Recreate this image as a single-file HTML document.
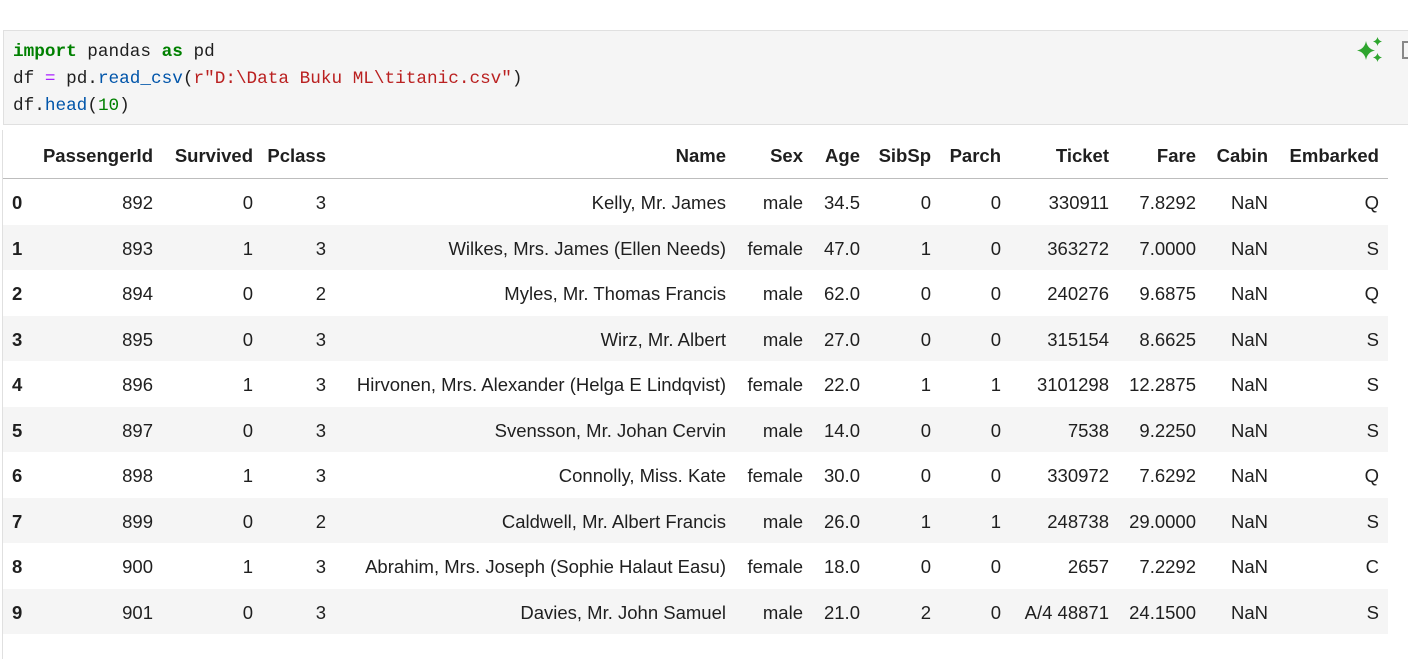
<!DOCTYPE html>
<html><head><meta charset="utf-8"><style>
body{margin:0;width:1408px;height:659px;background:#fff;overflow:hidden;position:relative;font-family:"Liberation Sans",Arial,sans-serif;}
.code{position:absolute;left:3px;top:30px;width:1420px;height:93px;background:#f5f5f5;border:1px solid #e0e0e0;}
.code pre{margin:0;position:absolute;left:9px;top:8px;font-family:"Liberation Mono",monospace;font-size:17.7px;line-height:27px;color:#1f1f1f;}
.k{color:#008000;font-weight:bold}.o{color:#aa22ff}.f{color:#0055aa}.s{color:#ba2121}.n{color:#008000}
.lb{position:absolute;left:2px;top:130px;width:1px;height:529px;background:#e0e0e0;}
table{position:absolute;left:3px;top:130px;border-collapse:collapse;table-layout:fixed;font-size:18.5px;color:#1f1f1f;}
th,td{padding:0;text-align:right;white-space:nowrap;overflow:visible;}
th{height:45px;border-bottom:1px solid #bdbdbd;font-weight:bold;padding-top:3px;}
td{height:42.5px;padding-top:3px;}
tr.g td{background:#f5f5f5;}
td.i,th.i{text-align:left;padding-left:9px;font-weight:bold;}
.ai{position:absolute;left:1355px;top:37px;}
.cp{position:absolute;left:1402px;top:41px;width:8px;height:14px;border:2px solid #888;border-right:none;}
</style></head><body>
<div class="code"><pre><span class="k">import</span> pandas <span class="k">as</span> pd
df <span class="o">=</span> pd.<span class="f">read_csv</span>(<span class="s">r"D:\Data Buku ML\titanic.csv"</span>)
df.<span class="f">head</span>(<span class="n">10</span>)</pre></div>
<svg class="ai" width="30" height="28" viewBox="0 0 30 28"><path fill="#2ea52e" d="M11 4 Q12.5 12 20 13.5 Q12.5 15 11 23 Q9.5 15 2 13.5 Q9.5 12 11 4Z M22.5 0 Q23.3 3.7 27 4.5 Q23.3 5.3 22.5 9 Q21.7 5.3 18 4.5 Q21.7 3.7 22.5 0Z M22.5 16 Q23.3 19.7 27 20.5 Q23.3 21.3 22.5 25 Q21.7 21.3 18 20.5 Q21.7 19.7 22.5 16Z"/></svg>
<div class="cp"></div>
<div class="lb"></div>
<table>
<colgroup><col style="width:27px"><col style="width:123px"><col style="width:100px"><col style="width:73px"><col style="width:400px"><col style="width:77px"><col style="width:57px"><col style="width:71px"><col style="width:70px"><col style="width:108px"><col style="width:87px"><col style="width:72px"><col style="width:111px"><col style="width:9px"></colgroup>
<tr><th class="i"></th><th>PassengerId</th><th>Survived</th><th>Pclass</th><th>Name</th><th>Sex</th><th>Age</th><th>SibSp</th><th>Parch</th><th>Ticket</th><th>Fare</th><th>Cabin</th><th>Embarked</th><th></th></tr>
<tr><td class="i">0</td><td>892</td><td>0</td><td>3</td><td>Kelly, Mr. James</td><td>male</td><td>34.5</td><td>0</td><td>0</td><td>330911</td><td>7.8292</td><td>NaN</td><td>Q</td><td></td></tr>
<tr class="g"><td class="i">1</td><td>893</td><td>1</td><td>3</td><td>Wilkes, Mrs. James (Ellen Needs)</td><td>female</td><td>47.0</td><td>1</td><td>0</td><td>363272</td><td>7.0000</td><td>NaN</td><td>S</td><td></td></tr>
<tr><td class="i">2</td><td>894</td><td>0</td><td>2</td><td>Myles, Mr. Thomas Francis</td><td>male</td><td>62.0</td><td>0</td><td>0</td><td>240276</td><td>9.6875</td><td>NaN</td><td>Q</td><td></td></tr>
<tr class="g"><td class="i">3</td><td>895</td><td>0</td><td>3</td><td>Wirz, Mr. Albert</td><td>male</td><td>27.0</td><td>0</td><td>0</td><td>315154</td><td>8.6625</td><td>NaN</td><td>S</td><td></td></tr>
<tr><td class="i">4</td><td>896</td><td>1</td><td>3</td><td>Hirvonen, Mrs. Alexander (Helga E Lindqvist)</td><td>female</td><td>22.0</td><td>1</td><td>1</td><td>3101298</td><td>12.2875</td><td>NaN</td><td>S</td><td></td></tr>
<tr class="g"><td class="i">5</td><td>897</td><td>0</td><td>3</td><td>Svensson, Mr. Johan Cervin</td><td>male</td><td>14.0</td><td>0</td><td>0</td><td>7538</td><td>9.2250</td><td>NaN</td><td>S</td><td></td></tr>
<tr><td class="i">6</td><td>898</td><td>1</td><td>3</td><td>Connolly, Miss. Kate</td><td>female</td><td>30.0</td><td>0</td><td>0</td><td>330972</td><td>7.6292</td><td>NaN</td><td>Q</td><td></td></tr>
<tr class="g"><td class="i">7</td><td>899</td><td>0</td><td>2</td><td>Caldwell, Mr. Albert Francis</td><td>male</td><td>26.0</td><td>1</td><td>1</td><td>248738</td><td>29.0000</td><td>NaN</td><td>S</td><td></td></tr>
<tr><td class="i">8</td><td>900</td><td>1</td><td>3</td><td>Abrahim, Mrs. Joseph (Sophie Halaut Easu)</td><td>female</td><td>18.0</td><td>0</td><td>0</td><td>2657</td><td>7.2292</td><td>NaN</td><td>C</td><td></td></tr>
<tr class="g"><td class="i">9</td><td>901</td><td>0</td><td>3</td><td>Davies, Mr. John Samuel</td><td>male</td><td>21.0</td><td>2</td><td>0</td><td>A/4 48871</td><td>24.1500</td><td>NaN</td><td>S</td><td></td></tr>
</table>
</body></html>
